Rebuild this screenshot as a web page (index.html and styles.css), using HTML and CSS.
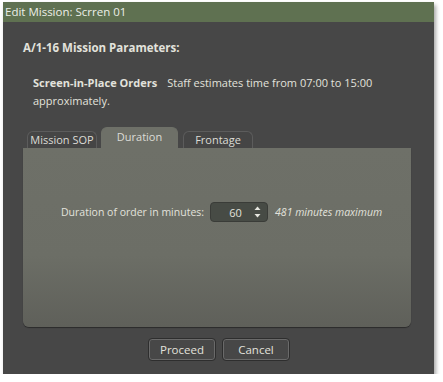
FILE: index.html
```html
<!DOCTYPE html>
<html lang="en">
<head>
    <meta charset="UTF-8">
    <title>Edit Mission</title>
    <link rel="stylesheet" href="styles.css">
</head>
<body>

    <div class="window">
        <div class="titlebar">Edit Mission: Scrren 01</div>

        <div class="content">
            <h2 class="params">A/1-16 Mission Parameters:</h2>

            <p class="orders"><strong>Screen-in-Place Orders</strong><span>Staff estimates time from 07:00 to 15:00 approximately.</span></p>

            <div class="tabs">
                <div class="tab">Mission SOP</div>
                <div class="tab active">Duration</div>
                <div class="tab">Frontage</div>
            </div>

            <div class="panel">
                <div class="field">
                    <label for="duration">Duration of order in minutes:</label>
                    <div class="spin">
                        <span class="spin-value" id="duration">60</span>
                        <span class="spin-arrows">
                            <svg width="7" height="14" viewBox="0 0 7 14">
                                <path d="M0.5 5 L3.5 1.5 L6.5 5 Z" fill="#e6e6e0"/>
                                <path d="M0.5 9 L3.5 12.5 L6.5 9 Z" fill="#e6e6e0"/>
                            </svg>
                        </span>
                    </div>
                    <span class="hint">481 minutes maximum</span>
                </div>
            </div>

            <div class="buttons">
                <button type="button">Proceed</button>
                <button type="button">Cancel</button>
            </div>
        </div>
    </div>

</body>
</html>
```

FILE: styles.css
```css
body {
    margin: 0;
    background-color: #ffffff;
    font-family: "Open Sans", "DejaVu Sans", sans-serif;
    font-size: 11px;
    color: #e2e2dc;
}
.window {
    margin: 2px 0 0 3px;
    width: 431px;
    height: 372px;
    background-color: #474747;
    box-shadow: 2px 3px 4px rgba(0, 0, 0, 0.35);
    display: flex;
    flex-direction: column;
}
.titlebar {
    height: 20px;
    line-height: 20px;
    padding-left: 2px;
    background-color: #5f7151;
    color: #ecefe8;
    font-size: 11.5px;
}
.content {
    padding: 0 23px 0 20px;
    display: flex;
    flex-direction: column;
}
.params {
    margin: 17px 0 0;
    font-size: 11.5px;
    font-weight: bold;
    line-height: 18px;
}
.orders {
    margin: 17px 0 0 10px;
    line-height: 18px;
}
.orders strong {
    font-weight: bold;
    margin-right: 10px;
}
.tabs {
    display: flex;
    align-items: flex-end;
    gap: 4px;
    margin-top: 17px;
    padding-left: 4px;
    height: 21px;
}
.tab {
    box-sizing: border-box;
    width: 70px;
    height: 17px;
    line-height: 16px;
    border: 1px solid #5c5c5c;
    border-bottom: none;
    border-radius: 6px 6px 0 0;
    background-color: #454545;
    color: #dcdcd6;
    text-align: center;
    white-space: nowrap;
}
.tab.active {
    width: 77px;
    height: 21px;
    line-height: 17px;
    background-color: #6e7068;
    border-color: #6e7068;
}
.tab.active + .tab {
    margin-left: 1px;
}
.panel {
    height: 179px;
    background: linear-gradient(#6e7068, #6c6e66 60%, #5f605a);
    border-radius: 0 0 6px 6px;
    box-shadow: 0 1px 1px rgba(0, 0, 0, 0.4);
}
.field {
    display: flex;
    align-items: center;
    margin: 54px 0 0 38px;
    font-size: 10.5px;
}
.field label {
    margin-right: 6px;
}
.spin {
    display: flex;
    align-items: center;
    width: 56px;
    height: 18px;
    background-color: #474b45;
    border: 1px solid #3a3c38;
    border-radius: 4px;
    font-size: 11px;
}
.spin-value {
    flex: 1;
    text-align: center;
    padding-left: 6px;
}
.spin-arrows {
    display: flex;
    padding-right: 6px;
}
.hint {
    margin-left: 7px;
    font-style: italic;
    white-space: nowrap;
}
.buttons {
    display: flex;
    justify-content: center;
    gap: 6px;
    margin-top: 11px;
    padding-left: 4px;
}
button {
    width: 68px;
    height: 23px;
    padding: 0;
    font-family: inherit;
    font-size: 11.5px;
    color: #e2e2dc;
    background-color: #474747;
    border: 1px solid #2e2e2e;
    border-radius: 4px;
    box-shadow: inset 0 0 0 1px #6a6a6a;
}
```
